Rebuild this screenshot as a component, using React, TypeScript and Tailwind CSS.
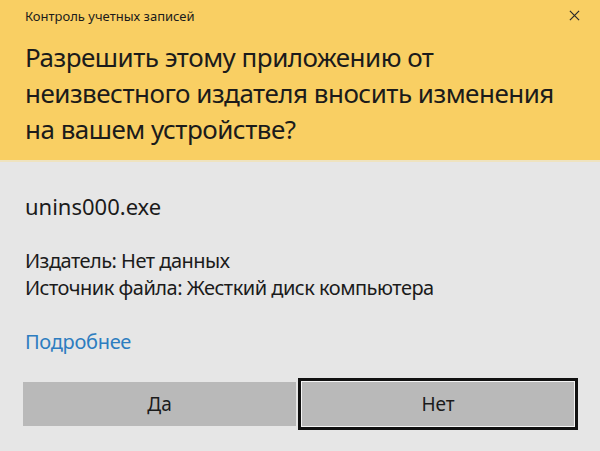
// UAC prompt (Windows 10 style), yellow header = unknown publisher.

const font = "font-['Noto_Sans','Liberation_Sans',sans-serif]"

function CloseIcon() {
  return (
    <svg viewBox="0 0 12 12" className="h-[11px] w-[11px]" aria-hidden>
      <path d="M1 1L11 11M11 1L1 11" stroke="#2a2a2a" strokeWidth="1.3" fill="none" />
    </svg>
  )
}

export default function App() {
  return (
    <div className={`flex h-[451px] w-[600px] flex-col bg-[#e6e6e6] text-[#1b1b1b] ${font}`}>
      <header className="h-[160px] bg-[#f9cf63] px-[25px]">
        <div className="flex h-[33px] items-center justify-between">
          <span className="text-[13px]">Контроль учетных записей</span>
          <span className="mr-[-5px] mt-[-3px]">
            <CloseIcon />
          </span>
        </div>
        <h1 className="pt-[6px] text-[26px] leading-[36px] tracking-[-0.5px]">
          Разрешить этому приложению от
          <br />
          неизвестного издателя вносить изменения
          <br />
          на вашем устройстве?
        </h1>
      </header>
      <div className="h-[2px] bg-[#efe3bf]" />

      <main className="flex flex-1 flex-col px-[25px]">
        <p className="pt-[30px] text-[22px] leading-[28px]">unins000.exe</p>
        <div className="pt-[27px] text-[20px] leading-[27px] tracking-[-0.5px]">
          <p>Издатель: Нет данных</p>
          <p>Источник файла: Жесткий диск компьютера</p>
        </div>
        <a className="pt-[27px] text-[20px] leading-[28px] tracking-[-0.3px] text-[#2d7dc0]">Подробнее</a>

        <div className="ml-[-2px] mt-[26px] flex gap-[6px]">
          <button className="h-[44px] w-[273px] bg-[#b9b9b9] text-[19px]">Да</button>
          <button className="h-[44px] w-[272px] bg-[#b9b9b9] text-[19px] shadow-[0_0_0_1px_#f4f4f4,0_0_0_4px_#111]">
            Нет
          </button>
        </div>
      </main>
    </div>
  )
}
